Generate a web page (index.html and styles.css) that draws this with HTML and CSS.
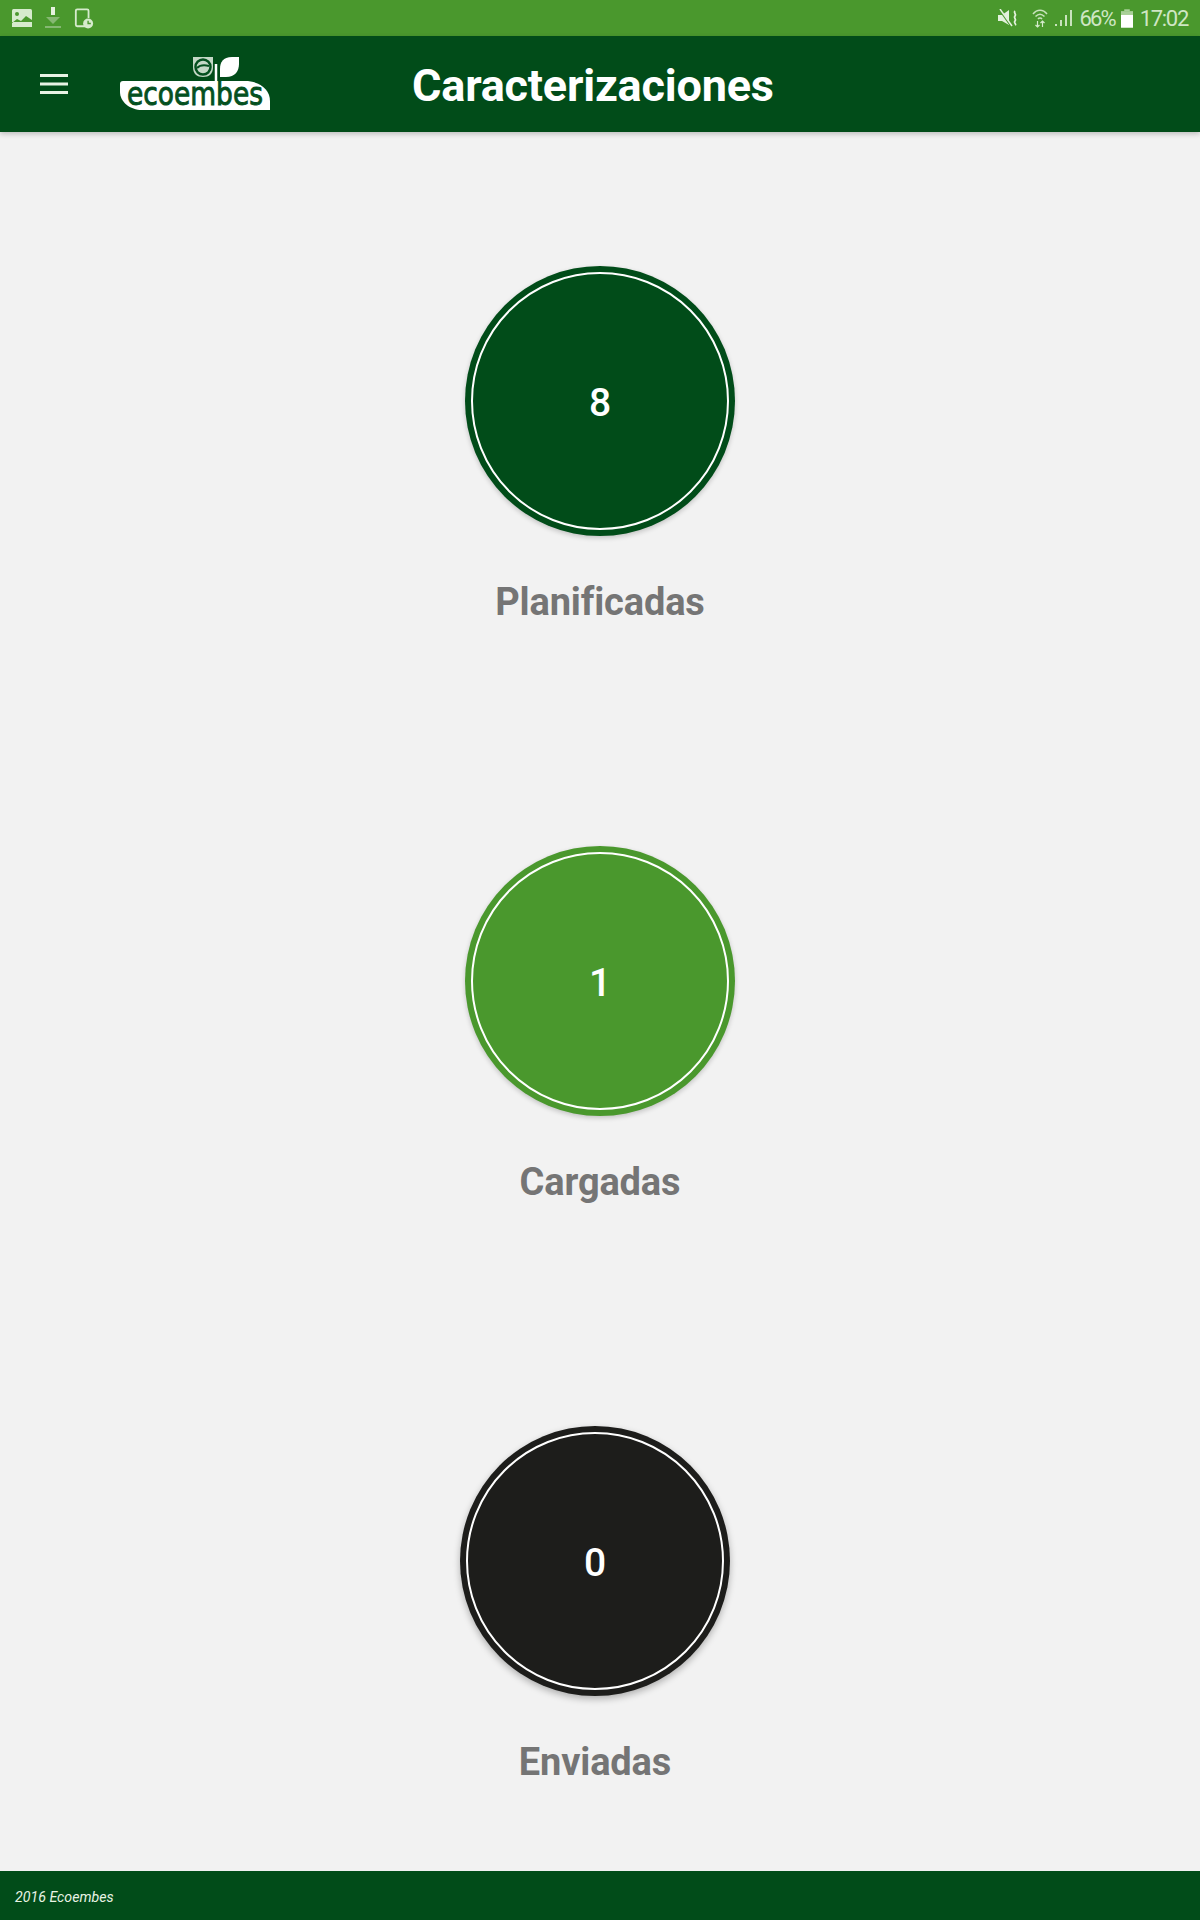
FILE: index.html
```html
<!DOCTYPE html>
<html lang="es">
<head>
<meta charset="utf-8">
<title>Caracterizaciones</title>
<link rel="stylesheet" href="styles.css">
</head>
<body>
<div class="status-bar">
  <div class="status-left">
    <svg class="ic" width="22" height="20" viewBox="0 0 22 20"><rect x="1" y="1" width="20" height="18" rx="1.5" fill="#d6ebcd"/><circle cx="6" cy="6" r="2" fill="#4a982e"/><path d="M1 15l5-4 4 2 5-5 6 4v2H1z" fill="#4a982e"/><path d="M1 17l6-3 5 2 4-2 5 1v4H1z" fill="#d6ebcd"/></svg>
    <svg class="ic dim" width="16" height="22" viewBox="0 0 16 22"><rect x="6" y="0" width="4" height="8" fill="#e6f2df"/><path d="M1 10h14l-7 7z" fill="#86b873"/><rect x="0" y="19" width="16" height="2" fill="#86b873"/></svg>
    <svg class="ic" width="20" height="21" viewBox="0 0 22 23"><path d="M13 20H3.500a1.500 1.500 0 0 1-1.500-1.500V3A1.500 1.500 0 0 1 3.500 1.500h11A1.500 1.500 0 0 1 16 3v8" fill="none" stroke="#d6ebcd" stroke-width="2"/><circle cx="15.500" cy="17" r="5.500" fill="#d6ebcd"/><path d="M15.500 14v3h3" fill="none" stroke="#4a982e" stroke-width="1.500"/></svg>
  </div>
  <div class="status-right">
    <svg class="mute" width="20" height="18" viewBox="0 0 20 18"><path d="M0 6h4l7-5v15l-7-4H0z" fill="#e4f1dd"/><path d="M1 0l12 17" stroke="#4a982e" stroke-width="2"/><path d="M2 0l12 17" stroke="#e4f1dd" stroke-width="1.500"/><path d="M17 2c-2 2 2 3 0 5s2 3 0 5 2 3 0 4" fill="none" stroke="#e4f1dd" stroke-width="1.800"/></svg>
    <svg class="wifi" width="16" height="20" viewBox="0 0 16 20"><path d="M1 6c4-5 10-5 14 0M3.500 8.500c3-3 6-3 9 0M6 11c1-1.200 3-1.200 4 0" fill="none" stroke="#c9e3bd" stroke-width="1.500"/><path d="M5.500 13v6M3.500 17l2 2 2-2M10.500 19v-6M8.500 15l2-2 2 2" fill="none" stroke="#d6ebcd" stroke-width="1.200"/></svg>
    <svg class="signal" width="18" height="18" viewBox="0 0 18 18"><rect x="0" y="15" width="2" height="2" fill="#c9e3bd"/><rect x="5" y="11" width="2" height="6" fill="#c9e3bd"/><rect x="10" y="6" width="2" height="11" fill="#c9e3bd"/><rect x="15" y="1" width="2" height="16" fill="#c9e3bd"/></svg>
    <span class="status-text pct">66%</span>
    <svg class="battery" width="12" height="19" viewBox="0 0 13 20"><rect x="3.500" y="0" width="6" height="2" fill="#a9d098"/><rect x="0" y="2" width="13" height="4" fill="#a9d098"/><rect x="0" y="6" width="13" height="14" fill="#fff"/></svg>
    <span class="status-text time">17:02</span>
  </div>
</div>

<header class="app-bar">
  <svg class="menu" width="28" height="20" viewBox="0 0 28 20"><path d="M0 1.500h28M0 10h28M0 18.500h28" stroke="#e8f3e4" stroke-width="2.800"/></svg>
  <svg class="logo" width="150" height="60" viewBox="0 0 150 60">
    <path d="M3 25h122c14 0 25 8 25 20v9H22C10 54 0 46 0 36V28a3 3 0 0 1 3-3z" fill="#fff"/>
    <path d="M73 1h20v10c0 7-4 10-10 10s-10-3-10-10z" fill="#c4d8c6"/>
    <circle cx="83" cy="11" r="7.500" fill="none" stroke="#04501f" stroke-width="2.500"/>
    <path d="M77 12c3-3 8-3 12-2" fill="none" stroke="#04501f" stroke-width="2"/>
    <path d="M100 21h6c9 0 13-6 13-13V1h-7c-9 0-12 5-12 12z" fill="#fff"/>
    <path d="M96 8v18" stroke="#fff" stroke-width="2.500"/>
    <text class="logo-text" transform="translate(7 49) scale(1 1.35)" textLength="136" lengthAdjust="spacingAndGlyphs">ecoembes</text>
  </svg>
  <h1 class="title">Caracterizaciones</h1>
</header>

<main class="stats">
  <section class="stat">
    <div class="circle dark"><div class="ring">8</div></div>
    <p class="label">Planificadas</p>
  </section>
  <section class="stat">
    <div class="circle green"><div class="ring">1</div></div>
    <p class="label">Cargadas</p>
  </section>
  <section class="stat shifted">
    <div class="circle black"><div class="ring">0</div></div>
    <p class="label">Enviadas</p>
  </section>
</main>

<footer class="footer">2016 Ecoembes</footer>
</body>
</html>
```

FILE: styles.css
```css
* { box-sizing: border-box; }

html, body { margin: 0; padding: 0; }

body {
  width: 1200px;
  height: 1920px;
  display: flex;
  flex-direction: column;
  background: #f2f2f2;
  font-family: Roboto, "Liberation Sans", sans-serif;
  overflow: hidden;
}

.status-bar {
  height: 36px;
  flex: none;
  display: flex;
  justify-content: space-between;
  align-items: center;
  padding: 0 12px 0 11px;
  background: #4a982d;
}

.status-left { display: flex; align-items: center; }
.status-left .ic { display: block; margin-right: 12px; }
.status-left .dim { margin-right: 13px; }

.status-right { display: flex; align-items: center; }
.mute { margin-right: 14px; }
.wifi { margin-right: 7px; }
.signal { margin-right: 7px; }
.battery { margin: 0 7px 0 6px; }

.status-text {
  padding-top: 2px;
  font-size: 22px;
  line-height: 26px;
  color: #cfe6c4;
  letter-spacing: -1.3px;
}

.pct { letter-spacing: -1.9px; }

.app-bar {
  position: relative;
  z-index: 1;
  height: 96px;
  flex: none;
  display: flex;
  align-items: center;
  padding-left: 40px;
  background: #014c19;
  box-shadow: 0 2px 5px rgba(0, 0, 0, 0.22);
}

.menu { display: block; flex: none; }
.logo { display: block; flex: none; margin: 0 0 -4px 52px; }

.logo-text {
  font-family: "DejaVu Sans", sans-serif;
  font-size: 24px;
  font-weight: 400;
  fill: #04501f;
  stroke: #04501f;
  stroke-width: 0.7px;
}

.title {
  margin: 4px 0 0 142px;
  font-size: 45px;
  line-height: 52px;
  font-weight: 700;
  color: #fff;
  letter-spacing: -0.2px;
}

.stats {
  flex: 1;
  padding-top: 134px;
  display: flex;
  flex-direction: column;
}

.stat {
  height: 580px;
  flex: none;
  display: flex;
  flex-direction: column;
  align-items: center;
}

.stat.shifted { padding-right: 10px; height: auto; }

.circle {
  width: 270px;
  height: 270px;
  padding: 6px;
  border-radius: 50%;
  box-shadow: 0 2px 5px rgba(0, 0, 0, 0.2);
}

.dark { background: #014c19; }
.green { background: #4a982d; }
.black { background: #1d1d1b; box-shadow: 0 3px 7px rgba(0, 0, 0, 0.28); }

.ring {
  height: 100%;
  display: flex;
  align-items: center;
  justify-content: center;
  padding-top: 3px;
  border: 2px solid #fff;
  border-radius: 50%;
  font-size: 39px;
  font-weight: 500;
  color: #fff;
}

.label {
  margin: 43px 0 0;
  font-size: 38px;
  line-height: 46px;
  font-weight: 700;
  color: #757575;
  letter-spacing: -0.15px;
}

.footer {
  height: 49px;
  flex: none;
  display: flex;
  align-items: center;
  padding: 2px 0 0 15px;
  background: #014c19;
  font-size: 14.2px;
  font-style: italic;
  color: #e8f3e4;
}
```
